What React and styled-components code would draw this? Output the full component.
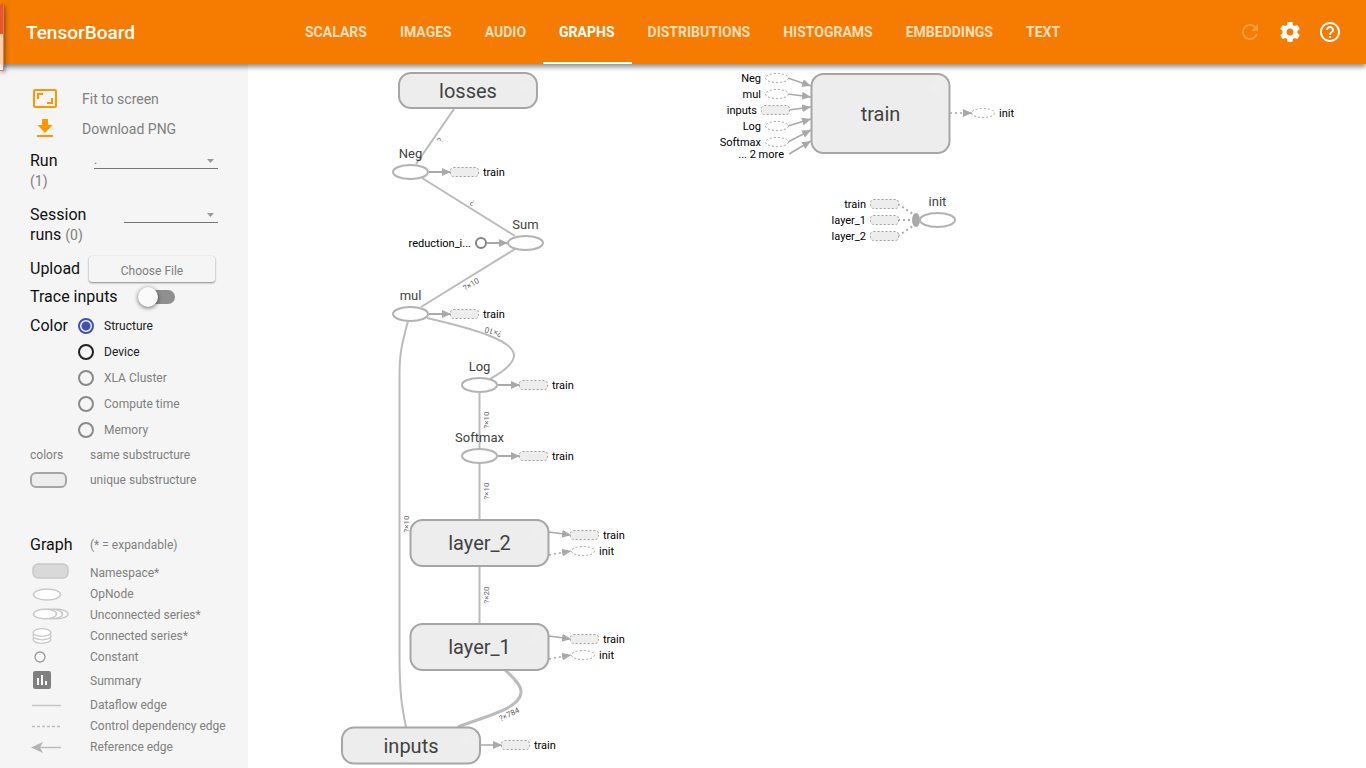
import React from "react";
import styled, { createGlobalStyle } from "styled-components";

const GlobalStyle = createGlobalStyle`
  * { box-sizing: border-box; }
  body { margin: 0; background: #fff; font-family: Roboto, "Liberation Sans", sans-serif; }
`;

const Page = styled.div`
  position: relative;
  display: flex;
  flex-direction: column;
  min-height: 100vh;
`;

const Header = styled.header`
  position: relative;
  z-index: 1;
  display: flex;
  align-items: center;
  height: 64px;
  padding-right: 24px;
  background: #f57c00;
  box-shadow: 0 3px 5px rgba(0, 0, 0, 0.45);
`;

const Brand = styled.h1`
  width: 248px;
  margin: 0;
  padding-left: 26px;
  font-size: 19px;
  font-weight: 500;
  color: #fff;
`;

const Tabs = styled.nav`
  display: flex;
  flex: 1;
  padding-left: 41px;
`;

const Tab = styled.a`
  display: flex;
  align-items: center;
  height: 64px;
  padding: 2px 17px 0 16px;
  border-bottom: 2px solid ${(p) => (p.$active ? "#fff" : "transparent")};
  font-size: 14px;
  font-weight: 700;
  color: ${(p) => (p.$active ? "#fff" : "#fddfbf")};
  text-decoration: none;
`;

const Actions = styled.div`
  display: flex;
  gap: 16px;
`;

const IconButton = styled.button`
  width: 24px;
  height: 24px;
  padding: 0;
  border: 0;
  background: none;
  color: #fff;
  opacity: ${(p) => (p.disabled ? 0.25 : 1)};

  svg { display: block; fill: currentColor; }
`;

const SideHandle = styled.div`
  position: absolute;
  z-index: 2;
  top: 5px;
  left: 0;
  width: 4px;
  height: 66px;
  border: solid #e57368;
  border-width: 0 1px 1px 0;
  background: linear-gradient(#e8562a 29px, rgba(255, 255, 255, 0.65) 29px);
  box-shadow: 1px 1px 4px rgba(0, 0, 0, 0.5);
`;

const Body = styled.div`
  display: flex;
  flex: 1;
`;

const Sidebar = styled.aside`
  flex: 0 0 248px;
  padding: 20px 0 10px 30px;
  background: #f5f5f5;
  color: #111;
`;

const SidebarActions = styled.div`
  margin-bottom: 7px;
`;

const ActionRow = styled.button`
  display: flex;
  align-items: center;
  gap: 22px;
  width: 100%;
  height: 30px;
  padding: 0;
  border: 0;
  background: none;
  font: 14px Roboto, sans-serif;
  color: #808080;

  svg { display: block; width: 30px; fill: #ff9800; }
`;

const Field = styled.div`
  display: flex;
  align-items: flex-start;
  height: ${(p) => p.$height}px;
  padding-right: 30px;
`;

const FieldLabel = styled.label`
  flex: none;
  width: ${(p) => p.$width}px;
  font-size: 16px;
  line-height: 20px;
`;

const Count = styled.span`
  font-size: 14px;
  color: #808080;
`;

const SelectBox = styled.div`
  position: relative;
  flex: 1;

  svg { position: absolute; top: 8px; right: 4px; fill: #999; }
`;

const Select = styled.select`
  display: block;
  width: 100%;
  height: 18px;
  padding: 0;
  border: 0;
  border-bottom: 1px solid #757575;
  border-radius: 0;
  background: none;
  appearance: none;
  font: 12px Roboto, sans-serif;
  color: #808080;
`;

const FileButton = styled.button`
  width: 126px;
  height: 26px;
  margin-top: -3px;
  padding: 4px 0 0;
  border: 0;
  border-radius: 3px;
  background: #f5f5f5;
  box-shadow: 0 1px 2px rgba(0, 0, 0, 0.45), 0 0 1px rgba(0, 0, 0, 0.1);
  font: 12px Roboto, sans-serif;
  color: #808080;
`;

const Switch = styled.input`
  position: relative;
  width: 34px;
  height: 14px;
  margin: 3px 0 0;
  border-radius: 7px;
  background: #8f8f8f;
  appearance: none;

  &::before {
    content: "";
    position: absolute;
    top: -3px;
    left: -3px;
    width: 20px;
    height: 20px;
    border-radius: 50%;
    background: #fafafa;
    box-shadow: 0 1px 4px rgba(0, 0, 0, 0.6);
  }
`;

const RadioGroup = styled.div`
  display: flex;
  flex-direction: column;
  margin-top: -3px;
`;

const RadioLabel = styled.label`
  display: flex;
  align-items: center;
  gap: 10px;
  height: 26px;
  font-size: 12px;
  color: ${(p) => (p.$muted ? "#808080" : "#212121")};
`;

const Radio = styled.input`
  width: 16px;
  height: 16px;
  margin: 0;
  border: 2px solid #212121;
  border-radius: 50%;
  appearance: none;

  &:checked {
    border-color: #3f51b5;
    background: radial-gradient(circle, #3f51b5 4px, transparent 5px);
  }
  &:disabled { border-color: #8a8a8a; }
`;

const Legend = styled.div`
  display: flex;
  flex-direction: column;
  margin-top: 36px;
`;

const LegendRow = styled.div`
  display: flex;
  align-items: center;
  height: ${(p) => p.$height || 21}px;
  font-size: 12px;
  color: #808080;
`;

const LegendHeading = styled(LegendRow)`
  margin-bottom: 4px;
`;

const LegendKey = styled.div`
  width: 60px;

  svg { display: block; }
`;

const LegendTitle = styled.h2`
  width: 60px;
  margin: 0;
  font-size: 16px;
  font-weight: 400;
  color: #111;
`;

const GraphPane = styled.main`
  display: flex;
  flex: 1;
  min-width: 0;
`;

const GraphSvg = styled.svg`
  flex: 1;
  width: 100%;
  min-height: 704px;
  font-family: Roboto, "Liberation Sans", sans-serif;
`;

const NodeBox = styled.rect`
  fill: #ededed;
  stroke: #a6a6a6;
  stroke-width: 2px;
`;

const OpShape = styled.ellipse`
  fill: #fff;
  stroke: #b3b3b3;
  stroke-width: 2px;
`;

const NodeText = styled.text`
  font-size: ${(p) => (p.$large ? 20 : 13)}px;
  fill: #424242;
  text-anchor: middle;
`;

const NoteText = styled.text`
  font-size: 11px;
  fill: #000;
`;

const SizeText = styled.text`
  font-size: 8px;
  fill: #666;
  text-anchor: middle;
`;

const Edge = styled.path`
  fill: none;
  stroke: #bbb;
  stroke-width: ${(p) => p.$w || 2}px;
`;

const Link = styled.path`
  fill: none;
  stroke: #a9a9a9;
  stroke-width: ${(p) => p.$w || 2}px;
  stroke-dasharray: ${(p) => (p.$dashed ? "2 3" : "none")};
`;

const GhostBox = styled.rect`
  fill: #ededed;
  stroke: #a0a0a0;
  stroke-dasharray: 2 2;
`;

const GhostOval = styled.ellipse`
  fill: #fff;
  stroke: #a8a8a8;
  stroke-dasharray: 2 2;
`;

const tabs = ["SCALARS", "IMAGES", "AUDIO", "GRAPHS", "DISTRIBUTIONS", "HISTOGRAMS", "EMBEDDINGS", "TEXT"];

const colorModes = [
  { id: "structure", label: "Structure" },
  { id: "device", label: "Device" },
  { id: "xla", label: "XLA Cluster", disabled: true },
  { id: "time", label: "Compute time", disabled: true },
  { id: "memory", label: "Memory", disabled: true },
];

const namespaces = [
  { name: "losses", x: 151, y: 9, h: 35 },
  { name: "layer_2", x: 162.5, y: 456, h: 46 },
  { name: "layer_1", x: 162.5, y: 560, h: 46 },
  { name: "inputs", x: 94, y: 663.5, h: 36 },
  { name: "train", x: 563.5, y: 10, h: 79 },
];

const ops = [
  { name: "Neg", x: 162.5, y: 108 },
  { name: "Sum", x: 277.5, y: 179 },
  { name: "mul", x: 162.5, y: 250 },
  { name: "Log", x: 231.5, y: 321 },
  { name: "Softmax", x: 231.5, y: 392 },
  { name: "init", x: 689.5, y: 156 },
];

const edges = [
  { d: "M206 45L168 100" },
  { d: "M174 114L267 172" },
  { d: "M267 185L173 243" },
  { d: "M179 254C222 264 267 276 266 292C265 301 253 309 242 315" },
  { d: "M160 257C154 280 151.500 288 151.500 312V590C151.500 630 154 644 158 663" },
  { d: "M231.500 328V385" },
  { d: "M231.500 399V455" },
  { d: "M231.500 503V559" },
  { d: "M257 606C266 614 274 622 273 629C271 645 238 652 210 663", w: 3 },
];

const sizes = [
  { t: "?", x: 192, y: 76, r: -55 },
  { t: "?", x: 224, y: 139, r: 212 },
  { t: "?×10", x: 223, y: 220, r: -32 },
  { t: "?×10", x: 245, y: 268, r: 198 },
  { t: "?×10", x: 238, y: 356, r: -90 },
  { t: "?×10", x: 238, y: 427, r: -90 },
  { t: "?×10", x: 158, y: 460, r: -90 },
  { t: "?×20", x: 238, y: 531, r: -90 },
  { t: "?×784", x: 261, y: 650, r: -26 },
];

const notes = [
  { t: "train", kind: "box", x: 216, y: 108, from: [181, 108], to: [203, 108] },
  { t: "train", kind: "box", x: 216, y: 250, from: [181, 250], to: [203, 250] },
  { t: "train", kind: "box", x: 285, y: 321, from: [250, 321], to: [272, 321] },
  { t: "train", kind: "box", x: 285, y: 392, from: [250, 392], to: [272, 392] },
  { t: "train", kind: "box", x: 336, y: 471, from: [301, 468], to: [323, 471], w: 1.5 },
  { t: "init", kind: "oval", x: 335, y: 487, from: [301, 491], to: [323, 487], w: 1.5, dashed: true },
  { t: "train", kind: "box", x: 336, y: 575, from: [301, 572], to: [323, 575], w: 1.5 },
  { t: "init", kind: "oval", x: 335, y: 591, from: [301, 595], to: [323, 591], w: 1.5, dashed: true },
  { t: "train", kind: "box", x: 267, y: 681, from: [233, 681], to: [254, 681], w: 1.5 },
  { t: "init", kind: "oval", x: 735, y: 49, from: [702, 49], to: [724, 49], w: 1.5, dashed: true },
  { t: "Neg", kind: "oval", left: true, x: 529, y: 14, from: [540, 14], to: [563, 22], w: 1.5 },
  { t: "mul", kind: "oval", left: true, x: 529, y: 30, from: [540, 30], to: [563, 33], w: 1.5 },
  { t: "inputs", kind: "box", left: true, x: 527, y: 46, from: [541, 46], to: [563, 43], w: 1.5 },
  { t: "Log", kind: "oval", left: true, x: 529, y: 62, from: [540, 62], to: [563, 55], w: 1.5 },
  { t: "Softmax", kind: "oval", left: true, x: 529, y: 78, from: [540, 78], to: [563, 66], w: 1.5 },
  { t: "... 2 more", left: true, x: 541, y: 90, from: [541, 90], to: [563, 77], w: 1.5 },
  { t: "train", kind: "box", left: true, x: 636, y: 140, from: [650, 140], to: [665, 150], dashed: true, plain: true },
  { t: "layer_1", kind: "box", left: true, x: 636, y: 156, from: [650, 156], to: [665, 156], dashed: true, plain: true },
  { t: "layer_2", kind: "box", left: true, x: 636, y: 172, from: [650, 172], to: [665, 162], dashed: true, plain: true },
];

const noteReach = { box: 18, oval: 16 };

function Note({ t, kind, left, x, y, from, to, w, dashed, plain }) {
  const reach = noteReach[kind] || 5;
  return (
    <g>
      <Link
        d={`M${from[0]} ${from[1]}L${to[0]} ${to[1]}`}
        $w={w}
        $dashed={dashed}
        markerEnd={plain ? undefined : "url(#arrow)"}
      />
      {kind === "box" && <GhostBox x={x - 13.5} y={y - 4.5} width="28" height="9" rx="3" />}
      {kind === "oval" && <GhostOval cx={x} cy={y} rx="11.5" ry="4.5" />}
      <NoteText x={left ? x - reach : x + reach + (kind === "box" ? 1 : 0)} y={y + 4} textAnchor={left ? "end" : "start"}>
        {t}
      </NoteText>
    </g>
  );
}

function Graph() {
  return (
    <GraphSvg role="img" aria-label="Model graph">
      <defs>
        <marker id="arrow" markerUnits="userSpaceOnUse" markerWidth="10" markerHeight="10" refX="9" refY="4.5" orient="auto">
          <path d="M0 0.500L9 4.500L0 8.500Z" fill="#a9a9a9" />
        </marker>
      </defs>
      {edges.map((e) => <Edge key={e.d} d={e.d} $w={e.w} />)}
      {sizes.map((s) => (
        <SizeText key={`${s.x}-${s.y}`} transform={`translate(${s.x} ${s.y}) rotate(${s.r})`} y="3">{s.t}</SizeText>
      ))}
      {notes.map((n) => <Note key={`${n.x}-${n.y}`} {...n} />)}
      <ellipse cx="668" cy="156" rx="4" ry="7" fill="#a9a9a9" />
      <Link d="M239 179H260" markerEnd="url(#arrow)" />
      <circle cx="233" cy="179" r="5" fill="#fff" stroke="#848484" strokeWidth="2" />
      <NoteText x="223" y="183" textAnchor="end">reduction_i...</NoteText>
      {namespaces.map((n) => (
        <g key={n.name}>
          <NodeBox x={n.x} y={n.y} width="138" height={n.h} rx="12" />
          <circle cx={n.x + 124} cy={n.y + 14} r="5" fill="#efeeed" />
          <NodeText $large x={n.x + 69} y={n.y + n.h / 2 + 7}>{n.name}</NodeText>
        </g>
      ))}
      {ops.map((o) => (
        <g key={o.name}>
          <OpShape cx={o.x} cy={o.y} rx="17.500" ry="7" />
          <NodeText x={o.x} y={o.y - 14}>{o.name}</NodeText>
        </g>
      ))}
    </GraphSvg>
  );
}

const Caret = () => (
  <svg width="7" height="4" aria-hidden="true"><path d="M0 0H7L3.500 4Z" /></svg>
);

const key = { fill: "#fff", stroke: "#c8c8c8", strokeWidth: 1.5 };

const legend = [
  { label: "Namespace*", art: <rect x="3" y="1" width="35" height="14" rx="5" {...key} fill="#d9d9d9" />, h: 20 },
  { label: "OpNode", art: <ellipse cx="17" cy="8.5" rx="13.500" ry="5.500" {...key} /> },
  {
    label: "Unconnected series*",
    art: (
      <g {...key}>
        <ellipse cx="26.500" cy="7" rx="11.500" ry="4.700" />
        <ellipse cx="21" cy="7" rx="11.500" ry="4.700" />
        <ellipse cx="15" cy="7" rx="11.500" ry="4.700" />
      </g>
    ),
  },
  {
    label: "Connected series*",
    art: (
      <g {...key} strokeWidth="1.3">
        <ellipse cx="12" cy="11.500" rx="9" ry="3.800" />
        <ellipse cx="12" cy="8" rx="9" ry="3.800" />
        <ellipse cx="12" cy="4.500" rx="9" ry="3.800" />
      </g>
    ),
  },
  { label: "Constant", art: <circle cx="10" cy="8" r="5" fill="#fff" stroke="#999" strokeWidth="1.3" /> },
  {
    label: "Summary",
    height: 27,
    h: 22,
    art: (
      <g>
        <rect x="3" y="1" width="18" height="18" rx="2" fill="#808080" />
        <path d="M7 8h2v7H7zM11 5h2v10h-2zM15 11h2v4h-2z" fill="#fff" />
      </g>
    ),
  },
  { label: "Dataflow edge", art: <path d="M2 8.500H31" stroke="#c4c4c4" strokeWidth="1.500" /> },
  { label: "Control dependency edge", art: <path d="M2 8.500H30" stroke="#bdbdbd" strokeWidth="1.500" strokeDasharray="3 2" /> },
  {
    label: "Reference edge",
    art: <g><path d="M8 8.500H31" stroke="#bdbdbd" strokeWidth="1.500" /><path d="M1 8.500L13 3L10 8.500L13 14Z" fill="#b4b4b4" /></g>,
  },
];

export default function App() {
  return (
    <Page>
      <GlobalStyle />
      <SideHandle />
      <Header>
        <Brand>TensorBoard</Brand>
        <Tabs>
          {tabs.map((t) => <Tab key={t} href="#" $active={t === "GRAPHS"}>{t}</Tab>)}
        </Tabs>
        <Actions>
          <IconButton disabled aria-label="Reload">
            <svg width="24" height="24" viewBox="0 0 24 24">
              <path d="M17.650 6.350C16.200 4.900 14.210 4 12 4c-4.420 0-7.990 3.580-7.990 8s3.570 8 7.990 8c3.730 0 6.840-2.550 7.730-6h-2.080c-.820 2.330-3.040 4-5.650 4-3.310 0-6-2.690-6-6s2.690-6 6-6c1.660 0 3.140.690 4.220 1.780L13 11h7V4l-2.350 2.350z" />
            </svg>
          </IconButton>
          <IconButton aria-label="Settings">
            <svg width="24" height="24" viewBox="0 0 24 24">
              <path d="M19.430 12.980c.040-.320.070-.640.070-.980s-.030-.660-.070-.980l2.110-1.650c.190-.150.240-.420.120-.640l-2-3.460c-.120-.220-.390-.300-.610-.220l-2.490 1c-.520-.400-1.080-.730-1.690-.980l-.380-2.650C14.460 2.180 14.250 2 14 2h-4c-.250 0-.460.180-.490.420l-.380 2.650c-.610.250-1.170.590-1.690.980l-2.490-1c-.230-.090-.490 0-.610.220l-2 3.460c-.130.220-.070.490.120.640l2.110 1.650c-.040.320-.070.650-.070.980s.030.660.070.980l-2.110 1.650c-.190.150-.240.420-.120.640l2 3.460c.120.220.390.300.610.220l2.490-1c.520.400 1.080.730 1.690.980l.380 2.650c.030.240.240.420.490.420h4c.250 0 .460-.180.490-.420l.380-2.650c.610-.250 1.170-.590 1.690-.980l2.490 1c.230.090.490 0 .610-.220l2-3.460c.120-.220.070-.490-.120-.640l-2.110-1.650zM12 15.500c-1.930 0-3.500-1.570-3.500-3.500s1.570-3.500 3.500-3.500 3.500 1.570 3.500 3.500-1.570 3.500-3.500 3.500z" />
            </svg>
          </IconButton>
          <IconButton aria-label="Help">
            <svg width="24" height="24" viewBox="0 0 24 24">
              <path d="M11 18h2v-2h-2v2zm1-16C6.480 2 2 6.480 2 12s4.480 10 10 10 10-4.480 10-10S17.520 2 12 2zm0 18c-4.410 0-8-3.590-8-8s3.590-8 8-8 8 3.590 8 8-3.590 8-8 8zm0-14c-2.210 0-4 1.790-4 4h2c0-1.100.900-2 2-2s2 .900 2 2c0 2-3 1.750-3 5h2c0-2.250 3-2.500 3-5 0-2.210-1.790-4-4-4z" />
            </svg>
          </IconButton>
        </Actions>
      </Header>
      <Body>
        <Sidebar>
          <SidebarActions>
            <ActionRow>
              <svg height="24" viewBox="0 0 30 24" aria-hidden="true">
                <path fillRule="evenodd" d="M5 2H25a2 2 0 0 1 2 2V19a2 2 0 0 1-2 2H5a2 2 0 0 1-2-2V4a2 2 0 0 1 2-2ZM5 4V19H25V4ZM7 6H13V8H9V12H7ZM21 11H23V17H17V15H21Z" />
              </svg>
              Fit to screen
            </ActionRow>
            <ActionRow>
              <svg height="24" viewBox="0 0 30 24" aria-hidden="true">
                <path d="M12 2H18V8H22.500L15 16L7.500 8H12ZM7 18H23V20H7Z" />
              </svg>
              Download PNG
            </ActionRow>
          </SidebarActions>
          <Field $height={54}>
            <FieldLabel htmlFor="run" $width={64}>
              <div>Run</div>
              <Count>(1)</Count>
            </FieldLabel>
            <SelectBox>
              <Select id="run"><option>.</option></Select>
              <Caret />
            </SelectBox>
          </Field>
          <Field $height={54}>
            <FieldLabel htmlFor="session" $width={94}>
              <div>Session</div>
              runs <Count>(0)</Count>
            </FieldLabel>
            <SelectBox>
              <Select id="session" />
              <Caret />
            </SelectBox>
          </Field>
          <Field $height={28}>
            <FieldLabel htmlFor="upload" $width={59}>Upload</FieldLabel>
            <FileButton id="upload">Choose File</FileButton>
          </Field>
          <Field $height={29}>
            <FieldLabel htmlFor="trace" $width={111}>Trace inputs</FieldLabel>
            <Switch id="trace" type="checkbox" role="switch" />
          </Field>
          <Field $height={129} role="radiogroup" aria-labelledby="color-label">
            <FieldLabel as="span" id="color-label" $width={48}>Color</FieldLabel>
            <RadioGroup>
              {colorModes.map((m) => (
                <RadioLabel key={m.id} $muted={m.disabled}>
                  <Radio type="radio" name="color" defaultChecked={m.id === "structure"} disabled={m.disabled} />
                  {m.label}
                </RadioLabel>
              ))}
            </RadioGroup>
          </Field>
          <LegendRow $height={20}><LegendKey>colors</LegendKey>same substructure</LegendRow>
          <LegendRow $height={30}>
            <LegendKey>
              <svg width="38" height="16"><rect x="1" y="1" width="35" height="14" rx="5" fill="#ededed" stroke="#a6a6a6" strokeWidth="2" /></svg>
            </LegendKey>
            unique substructure
          </LegendRow>
          <Legend>
            <LegendHeading $height={27}><LegendTitle>Graph</LegendTitle>(* = expandable)</LegendHeading>
            {legend.map((l) => (
              <LegendRow key={l.label} $height={l.height}>
                <LegendKey><svg width="40" height={l.h || 16}>{l.art}</svg></LegendKey>
                {l.label}
              </LegendRow>
            ))}
          </Legend>
        </Sidebar>
        <GraphPane>
          <Graph />
        </GraphPane>
      </Body>
    </Page>
  );
}
